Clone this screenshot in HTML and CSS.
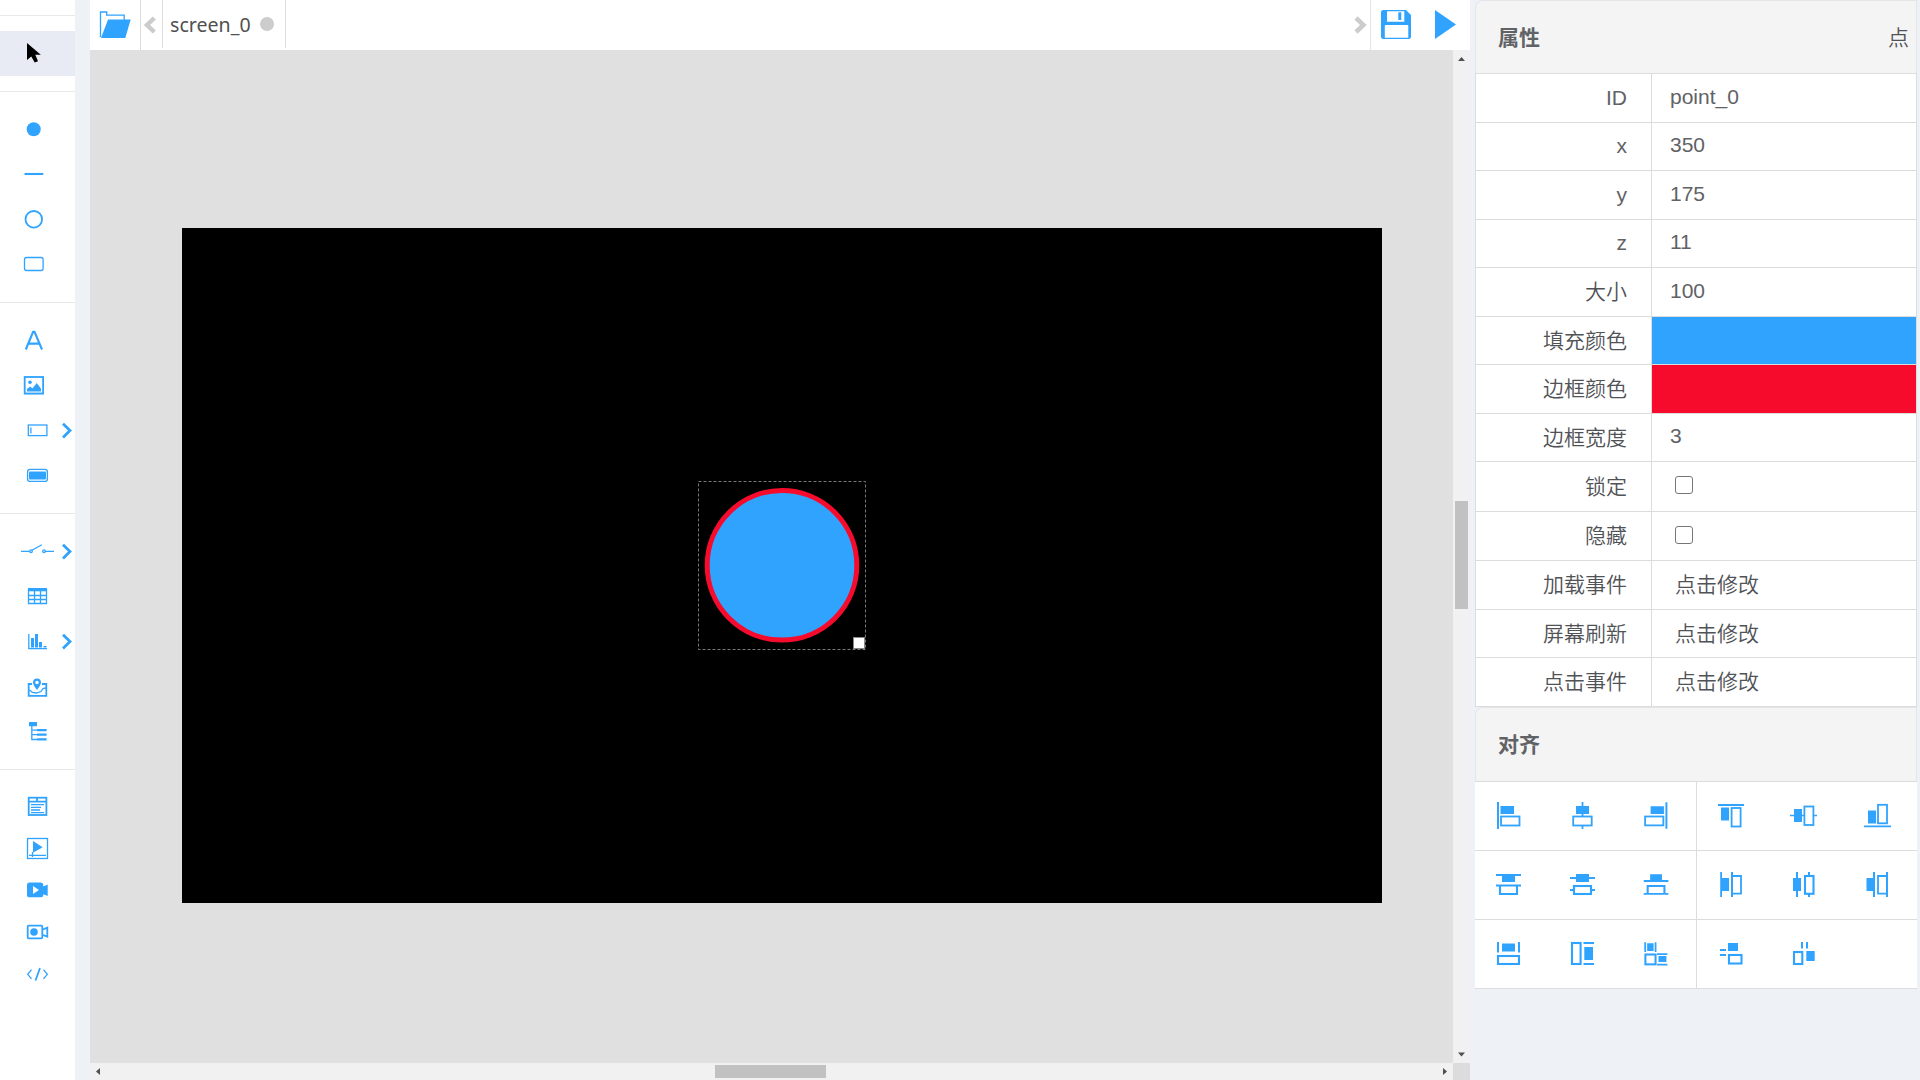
FILE: index.html
```html
<!DOCTYPE html>
<html lang="zh">
<head>
<meta charset="utf-8">
<title>screen_0</title>
<link rel="stylesheet" href="styles.css">
</head>
<body>
<div class="app">
  <nav class="tools">
    <div class="group group-select">
      <svg class="tool active" viewBox="0 0 75 45"><path class="cursor" d="M27 12V29L31.3 25.4L34.7 31.6L38 30.2L35.3 23.7H40.8Z"/></svg>
    </div>
    <div class="group">
      <svg class="tool" viewBox="0 0 75 45"><circle class="f" cx="33.7" cy="22.2" r="7"/></svg>
      <svg class="tool" viewBox="0 0 75 45"><path class="s w2" d="M24.5 22H43.3"/></svg>
      <svg class="tool" viewBox="0 0 75 45"><circle class="s w15" cx="33.8" cy="22.3" r="8.3"/></svg>
      <svg class="tool" viewBox="0 0 75 45"><rect class="s w1" x="24.5" y="15.5" width="18.6" height="13" rx="2"/></svg>
    </div>
    <div class="group">
      <svg class="tool" viewBox="0 0 75 45"><path class="s w2" d="M25.8 31.5L33.1 13.8H34.5L42 31.5M28.8 25.6H39"/></svg>
      <svg class="tool" viewBox="0 0 75 45"><rect class="s w15" x="24.7" y="14" width="18.4" height="16.5"/><path class="s w1" d="M24 30.6H44"/><circle class="f" cx="30" cy="19.3" r="1.8"/><path class="f" d="M27 28.5V26L30.3 23.5L32.4 25.6L36.8 20L41 25.8V28.5Z"/></svg>
      <svg class="tool" viewBox="0 0 75 45"><rect class="s w1" x="28.3" y="17" width="18.6" height="10.6"/><path class="s w1" d="M30.9 19.5V25.5"/><path class="s arrow" d="M63 15.7L70 22.5L63 29.4"/></svg>
      <svg class="tool" viewBox="0 0 75 45"><rect class="s w1" x="27.6" y="16.4" width="19.8" height="12" rx="2.5"/><rect class="f" x="29" y="18.4" width="17" height="8" rx="1"/></svg>
    </div>
    <div class="group">
      <svg class="tool" viewBox="0 0 75 45"><path class="s w1" d="M21 22.4H29.5M32 21.3L41.8 15.8M45 22.4H54"/><circle class="s w1" cx="31" cy="22.2" r="1.3"/><circle class="s w1" cx="44" cy="22.2" r="1.3"/><path class="s arrow" d="M63 15.7L70 22.5L63 29.4"/></svg>
      <svg class="tool" viewBox="0 0 75 45"><path class="s w1" d="M28.5 15V29.5H46.5V15M28 21.5H47M28 25.5H47M34.5 17V29M40.5 17V29"/><path class="f" d="M28 14H47V17.3H28Z"/></svg>
      <svg class="tool" viewBox="0 0 75 45"><path class="s w1" d="M28.8 15V29.7H47"/><path class="f" d="M31 19H34V28.6H31ZM35 15H38V28.6H35ZM39 23H42V28.6H39ZM43.5 27H46.5V28.6H43.5Z"/><path class="s arrow" d="M63 15.7L70 22.5L63 29.4"/></svg>
      <svg class="tool" viewBox="0 0 75 45"><path class="s w15" d="M32 20H28.7V31.8H46.3V20H42"/><path class="s w1" d="M29.5 26L32.5 28.5L36.5 29L41 27.5L43 24.5L46 24"/><path class="f" fill-rule="evenodd" d="M37 14.5C34.7 14.5 33 16.2 33 18.4C33 20.8 35 22.8 37 26C39 22.8 41 20.8 41 18.4C41 16.2 39.3 14.5 37 14.5ZM37 16.7A1.8 1.8 0 1 1 37 20.3A1.8 1.8 0 0 1 37 16.7Z"/></svg>
      <svg class="tool" viewBox="0 0 75 45"><path class="f" d="M29 13H37V17.2H29ZM37 20H46.6V22.3H37ZM37 24.6H46.6V26.8H37ZM37 29.3H46.6V31.6H37Z"/><path class="s w1" d="M31.8 17V30.5H37M32 21.2H37M32 25.7H37"/></svg>
    </div>
    <div class="group group-media">
      <svg class="tool" viewBox="0 0 75 42"><rect class="s w15" x="28.7" y="12.7" width="17.7" height="17.3"/><path class="s w15" d="M28.5 16.6H46.5M37 12.5V16"/><path class="s w1" d="M31 19.7H44M31 22.4H41M31 25H40M31 27.6H44"/></svg>
      <svg class="tool" viewBox="0 0 75 42"><rect class="s w1" x="27.5" y="11.5" width="20" height="20"/><path class="f" d="M33 14L42.7 20.2L33 25.8Z"/><path class="s w1" d="M29 28.4H46M32.5 25V30"/></svg>
      <svg class="tool" viewBox="0 0 75 42"><path class="f" fill-rule="evenodd" d="M29.5 13.5H40.5Q43.3 13.5 43.3 16.5V17.5L47.7 15.5V27L43.3 25.2V25.7Q43.3 28.3 40.5 28.3H29.5Q27 28.3 27 25.7V16.2Q27 13.5 29.5 13.5ZM33 17V25L39 21Z"/></svg>
      <svg class="tool" viewBox="0 0 75 42"><rect class="s w15" x="27.7" y="14.7" width="14.6" height="12.6" rx="1"/><circle class="f" cx="34" cy="21" r="3.8"/><path class="s w15" d="M43 18.5L47.3 16.7V25.7L43 24"/></svg>
      <svg class="tool" viewBox="0 0 75 42"><path class="s w1" d="M31.5 16.7L27.7 21.3L31.5 25.8M43.5 16.7L47.3 21.3L43.5 25.8"/><path class="s w15" d="M40 15L35.5 27.5"/></svg>
    </div>
  </nav>

  <main class="workspace">
    <header class="topbar">
      <div class="open"><svg width="50" height="50" viewBox="0 0 50 50"><path class="s w1" d="M10.5 37V12H16.7V15.2H34.2V20"/><path class="f" d="M18 19.5H40.7L35.3 38H11Z"/></svg></div>
      <div class="prev"><svg width="21" height="50" viewBox="0 0 21 50"><path class="nav-arrow" d="M13.3 18L6 25L13.3 32"/></svg></div>
      <div class="tab"><span>screen_0</span><i class="dot"></i></div>
      <div class="next"><svg width="20" height="50" viewBox="0 0 20 50"><path class="nav-arrow" d="M6 18L13.4 25L6 32"/></svg></div>
      <div class="actions"><svg width="99" height="50" viewBox="0 0 99 50">
        <path class="f" fill-rule="evenodd" d="M12.5 10H35L40 15V36.5Q40 39 37.5 39H12.5Q10 39 10 36.5V12.5Q10 10 12.5 10ZM16 11.3V21.7H33.3V11.3ZM14.8 25Q13.8 25 13.8 26V37.8H37.3V26Q37.3 25 36.3 25Z"/><path class="f" d="M27.3 12.3H30.3V20H27.3Z"/><path class="f" d="M64 10L85 24.5L64 39Z"/></svg></div>
    </header>
    <div class="viewport">
      <div class="canvas">
        <div class="selection">
          <svg width="168" height="169" viewBox="0 0 168 169"><rect class="outline" x="0.5" y="0.5" width="167" height="168"/><circle class="point" cx="84" cy="84.3" r="74.8"/><rect class="handle" x="155.5" y="156.5" width="11" height="11"/></svg>
        </div>
      </div>
    </div>
    <div class="vscroll"><svg width="17" height="17"><path d="M5 11H12L8.5 7Z"/></svg><i class="vthumb"></i><svg width="17" height="17"><path d="M5 6.5H12L8.5 10.5Z"/></svg></div>
    <div class="hscroll"><svg width="17" height="17"><path d="M10 5V12L6 8.5Z"/></svg><i class="hthumb"></i><svg width="17" height="17"><path d="M7 5V12L11 8.5Z"/></svg></div>
    <div class="corner"></div>
  </main>

  <aside class="panel">
    <header class="head head-props"><b>属性</b><span>点</span></header>
    <div class="props">
      <label>ID</label><div>point_0</div>
      <label>x</label><div>350</div>
      <label>y</label><div>175</div>
      <label>z</label><div>11</div>
      <label class="cn">大小</label><div>100</div>
      <label class="cn">填充颜色</label><div class="fill-color"></div>
      <label class="cn">边框颜色</label><div class="border-color"></div>
      <label class="cn">边框宽度</label><div>3</div>
      <label class="cn">锁定</label><div><i class="check"></i></div>
      <label class="cn">隐藏</label><div><i class="check"></i></div>
      <label class="cn">加载事件</label><div class="cn event">点击修改</div>
      <label class="cn">屏幕刷新</label><div class="cn event">点击修改</div>
      <label class="cn">点击事件</label><div class="cn event">点击修改</div>
    </div>
    <header class="head head-align"><b>对齐</b></header>
    <div class="align">
      <svg viewBox="0 0 74 68"><path class="f" d="M22 20H24V47H22ZM25.5 24H39V32H25.5Z"/><rect class="s w15" x="26" y="34.5" width="18.5" height="9"/></svg>
      <svg viewBox="0 0 74 68"><path class="s w15" d="M33.5 20V34M33.5 44V47"/><path class="f" d="M27 24H40V32H27Z"/><rect class="s w15" x="24.2" y="34.5" width="18.5" height="9"/></svg>
      <svg class="divide" viewBox="0 0 74 68"><path class="f" d="M28 24H41.5V32H28ZM43 20H45V47H43Z"/><rect class="s w15" x="22.4" y="34.5" width="18.5" height="9"/></svg>
      <svg viewBox="0 0 73 68"><path class="f" d="M21 22H47V24H21ZM24 25.5H32V38.5H24Z"/><rect class="s w15" x="34.6" y="26" width="9" height="18.5"/></svg>
      <svg viewBox="0 0 73 68"><path class="s w1" d="M20 33.5H34M43 33.5H47"/><path class="f" d="M24 27H32V40H24Z"/><rect class="s w15" x="34.4" y="24.5" width="9" height="18.5"/></svg>
      <svg viewBox="0 0 74 68"><path class="f" d="M25 28.5H33V41.5H25ZM21 43.5H48V45.3H21Z"/><rect class="s w15" x="35" y="22.8" width="9" height="18.5"/></svg>

      <svg viewBox="0 0 74 68"><path class="f" d="M21 23H46V25H21ZM27 24H40V31H27ZM21 33.5H46V35.5H21Z"/><path class="s w2" d="M25 35V43H42V35"/></svg>
      <svg viewBox="0 0 74 68"><path class="f" d="M27 23H40V31H27ZM21 26H46V28H21ZM21 38H25V40H21ZM42 38H46V40H42Z"/><rect class="s w2" x="25" y="35" width="17" height="8"/></svg>
      <svg class="divide" viewBox="0 0 74 68"><path class="f" d="M27.5 23H39.5V30H27.5ZM21 29H46V31H21ZM21 42H46V44H21Z"/><path class="s w2" d="M25 43V35H42V43"/></svg>
      <svg viewBox="0 0 73 68"><path class="f" d="M23.2 21H25V46H23.2ZM24 27H32V40H24ZM34 21H36V46H34Z"/><path class="s w15" d="M35 25H44V42.7H35"/></svg>
      <svg viewBox="0 0 73 68"><path class="f" d="M23 27H31V40H23ZM26 21H28V46H26ZM38 21H40V25H38ZM38 42H40V46H38Z"/><rect class="s w2" x="35" y="25" width="8.5" height="17.8"/></svg>
      <svg viewBox="0 0 74 68"><path class="f" d="M23.5 27H31V40H23.5ZM30 21H32V46H30ZM43 21H45V46H43Z"/><path class="s w15" d="M44 25H35V42.7H44"/></svg>

      <svg viewBox="0 0 74 68"><path class="f" d="M22 22H24V32.5H22ZM43 22H45V32.5H43ZM27 23.5H40V31.5H27Z"/><rect class="s w2" x="23" y="36" width="21" height="8"/></svg>
      <svg viewBox="0 0 74 68"><path class="f" d="M34.5 22H45V24H34.5ZM34.5 43H45V45H34.5ZM35.3 27H44V40H35.3Z"/><rect class="s w2" x="23" y="23" width="8.6" height="21"/></svg>
      <svg class="divide" viewBox="0 0 74 68"><path class="s w15" d="M22.5 22V32M33 22V32M34.5 34.2H45M34.5 44.7H45"/><path class="f" d="M24.5 23H31V31H24.5ZM36 36H44V42H36Z"/><rect class="s w2" x="22.7" y="34.5" width="10.3" height="10"/></svg>
      <svg viewBox="0 0 73 68"><path class="f" d="M23 29H29V31H23ZM23 34H29V36H23ZM31 23H41V31H31Z"/><rect class="s w2" x="32" y="35" width="12.5" height="8.5"/></svg>
      <svg viewBox="0 0 73 68"><path class="f" d="M31 22H33V28.5H31ZM36 22H38V28.5H36ZM36.3 31H44.7V41H36.3Z"/><rect class="s w2" x="24" y="32" width="8.3" height="12"/></svg>
      <svg viewBox="0 0 74 68"></svg>
    </div>
  </aside>
</div>
</body>
</html>
```
FILE: styles.css
```css
* { box-sizing: border-box; }
body { margin: 0; overflow: hidden; background: #eef2f6; color: #606266; font-family: "Liberation Sans", "Noto Sans CJK SC", sans-serif; font-size: 21px; }
svg { display: block; }
.app { display: grid; grid-template-columns: 75px 15px 1380px 5px 442px; height: 1080px; }
.tools { grid-column: 1; background: #fff; padding-top: 15px; }
.workspace { grid-column: 3; }
.panel { grid-column: 5; }

.group { border-top: 1px solid #e8e8e8; padding: 15px 0; }
.tool { width: 75px; height: 45px; }
.group-media .tool { height: 42px; }
.active { background: #e8ebf3; }
.cursor { fill: #000; }
.f { fill: #30a3ff; }
.s { fill: none; stroke: #30a3ff; }
.w1 { stroke-width: 1.3; }
.w15 { stroke-width: 1.8; }
.w2 { stroke-width: 2.1; }
.arrow { stroke-width: 2.8; }

.workspace { display: grid; grid-template: 50px 1013px 17px / 1363px 17px; }
.topbar { grid-column: 1 / 3; display: flex; background: #fff; }
.open { width: 51px; border-right: 1px solid #dcdcdc; }
.prev { width: 22px; height: 48px; border-right: 1px solid #dcdcdc; }
.tab { width: 123px; height: 48px; border-right: 1px solid #dcdcdc; display: flex; align-items: center; gap: 9px; padding-left: 7px; color: #505050; font-family: "Noto Sans", sans-serif; font-size: 19.6px; }
.dot { width: 14px; height: 14px; border-radius: 50%; background: #ccc; }
.nav-arrow { fill: none; stroke: #ccc; stroke-width: 4.5; }
.next { margin-left: auto; width: 20px; }
.actions { width: 100px; border-left: 1px solid #e4e4e4; }

.viewport { background: #e0e0e0; padding: 178px 0 0 92px; }
.canvas { width: 1200px; height: 675px; background: #000; position: relative; }
.selection { position: absolute; left: 516px; top: 253px; }
.outline { fill: none; stroke: #777; stroke-dasharray: 3 2; }
.point { fill: #30a3ff; stroke: #f70b2c; stroke-width: 5; }
.handle { fill: #fff; stroke: #888; }
.vscroll, .hscroll { display: flex; justify-content: space-between; background: #f1f1f1; fill: #505050; }
.vscroll { flex-direction: column; align-items: center; }
.hscroll { align-items: center; }
.vthumb { width: 13px; height: 108px; background: #c1c1c1; margin-bottom: 3px; }
.hthumb { width: 111px; height: 13px; background: #c1c1c1; margin-right: 2px; }
.corner { background: #dcdcdc; }

.head { display: flex; align-items: center; justify-content: space-between; background: #f4f4f4; border: 1px solid #e3e5e8; border-bottom: 0; border-radius: 8px 0 0 0; padding: 0 7px 0 22px; }
.head-props { height: 73px; padding-bottom: 2px; }
.head-align { height: 74px; padding-bottom: 4px; }
.head span { font-weight: 350; color: #505256; }
.props { display: grid; grid-template-columns: 176px 1fr; grid-template-rows: 49px 48px 49px 48px 49px 48px 49px 48px 50px 49px 49px 48px 49px; border: 1px solid #dcdcdc; border-width: 1px 1px 0; background: #fff; }
.props label, .props div { border-bottom: 1px solid #dcdcdc; display: flex; align-items: center; }
.props label { justify-content: flex-end; padding-right: 24px; padding-bottom: 1px; border-right: 1px solid #dcdcdc; }
.props div { padding-left: 18px; padding-bottom: 3px; }
.props .cn { padding-bottom: 4px; font-weight: 350; color: #505256; }
.props .event { padding-left: 23px; }
.props .fill-color { background: #30a3ff; }
.props .border-color { background: #f70b2c; }
.check { width: 18px; height: 18px; margin-left: 5px; border: 1.5px solid #767676; border-radius: 3px; }
.align { display: grid; grid-template-columns: 74px 74px 74px 73px 73px 74px; grid-auto-rows: 69px; border-top: 1px solid #dcdcdc; background: #fff; }
.align svg { width: 100%; height: 69px; border-bottom: 1px solid #dcdcdc; }
.align .divide { border-right: 1px solid #dcdcdc; overflow: visible; }
```
